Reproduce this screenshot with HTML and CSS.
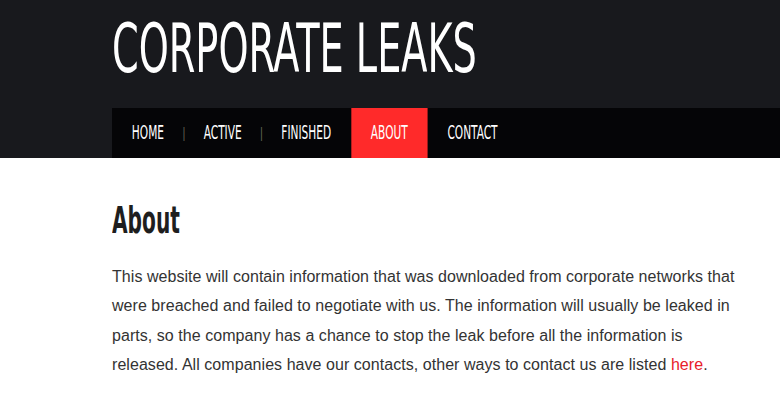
FILE: index.html
```html
<!DOCTYPE html>
<html lang="en">
<head>
<meta charset="UTF-8">
<meta name="viewport" content="width=device-width, initial-scale=1.0">
<link rel="stylesheet" href="styles.css">
<title>Corporate Leaks - About</title>
</head>
<body>
  <div class="header">
    <div class="wrap">
      <h1 class="logo"><span>CORPORATE LEAKS</span></h1>
      <div class="navbar">
        <ul class="nav">
          <li><a href="#">HOME</a></li>
          <li class="sep">|</li>
          <li><a href="#">ACTIVE</a></li>
          <li class="sep">|</li>
          <li><a href="#">FINISHED</a></li>
          <li><a href="#" class="current">ABOUT</a></li>
          <li><a href="#">CONTACT</a></li>
        </ul>
      </div>
    </div>
  </div>
  <div class="content">
    <h2><span>About</span></h2>
    <p>This website will contain information that was downloaded from corporate networks that were breached and failed to negotiate with us. The information will usually be leaked in parts, so the company has a chance to stop the leak before all the information is released. All companies have our contacts, other ways to contact us are listed <a href="#">here</a>.</p>
  </div>
</body>
</html>
```
FILE: styles.css
```css
/* no condensed web font offline, so the narrow headings are squeezed by hand */
body {
  margin: 0;
  padding: 0;
  background-color: #fff;
  font-family: "Liberation Sans", Arial, sans-serif;
  color: #333;
}

.header {
  background-color: #18191d;
}

.wrap {
  padding-left: 112px;
}

.logo {
  margin: 0;
  height: 108px;
  font-family: "DejaVu Sans Condensed", "DejaVu Sans", sans-serif;
  font-stretch: condensed;
  font-weight: normal;
  font-size: 68px;
  line-height: 97px;
  color: #fff;
  white-space: nowrap;
}

.logo span {
  display: inline-block;
  transform: scaleX(0.625);
  transform-origin: left center;
}

.navbar {
  height: 50px;
  background-color: #050507;
  overflow: hidden;
}

.nav {
  list-style: none;
  margin: 0;
  padding: 0;
  display: flex;
  height: 50px;
  transform: scaleX(0.62);
  transform-origin: left center;
}

.nav li {
  display: flex;
}

.nav a {
  display: block;
  height: 50px;
  padding: 0 32px;
  line-height: 48px;
  font-family: "DejaVu Sans Condensed", "DejaVu Sans", sans-serif;
  font-stretch: condensed;
  font-size: 19px;
  color: #fff;
  text-decoration: none;
}

.nav a.current {
  background-color: #ff2a2a;
}

.nav .sep {
  width: 0;
  justify-content: center;
  line-height: 50px;
  font-size: 15px;
  color: #6a6f5a;
}

.content {
  padding: 40px 40px 0 112px;
}

.content h2 {
  margin: 0 0 20px;
  font-family: "DejaVu Sans Condensed", "DejaVu Sans", sans-serif;
  font-stretch: condensed;
  font-weight: bold;
  font-size: 38px;
  line-height: 44px;
  color: #1e1e1e;
}

.content h2 span {
  display: inline-block;
  transform: scaleX(0.59);
  transform-origin: left center;
}

.content p {
  margin: 0;
  font-size: 16px;
  line-height: 29.3px;
  letter-spacing: 0.05px;
}

.content p a {
  color: #e8202a;
  text-decoration: none;
}
```
